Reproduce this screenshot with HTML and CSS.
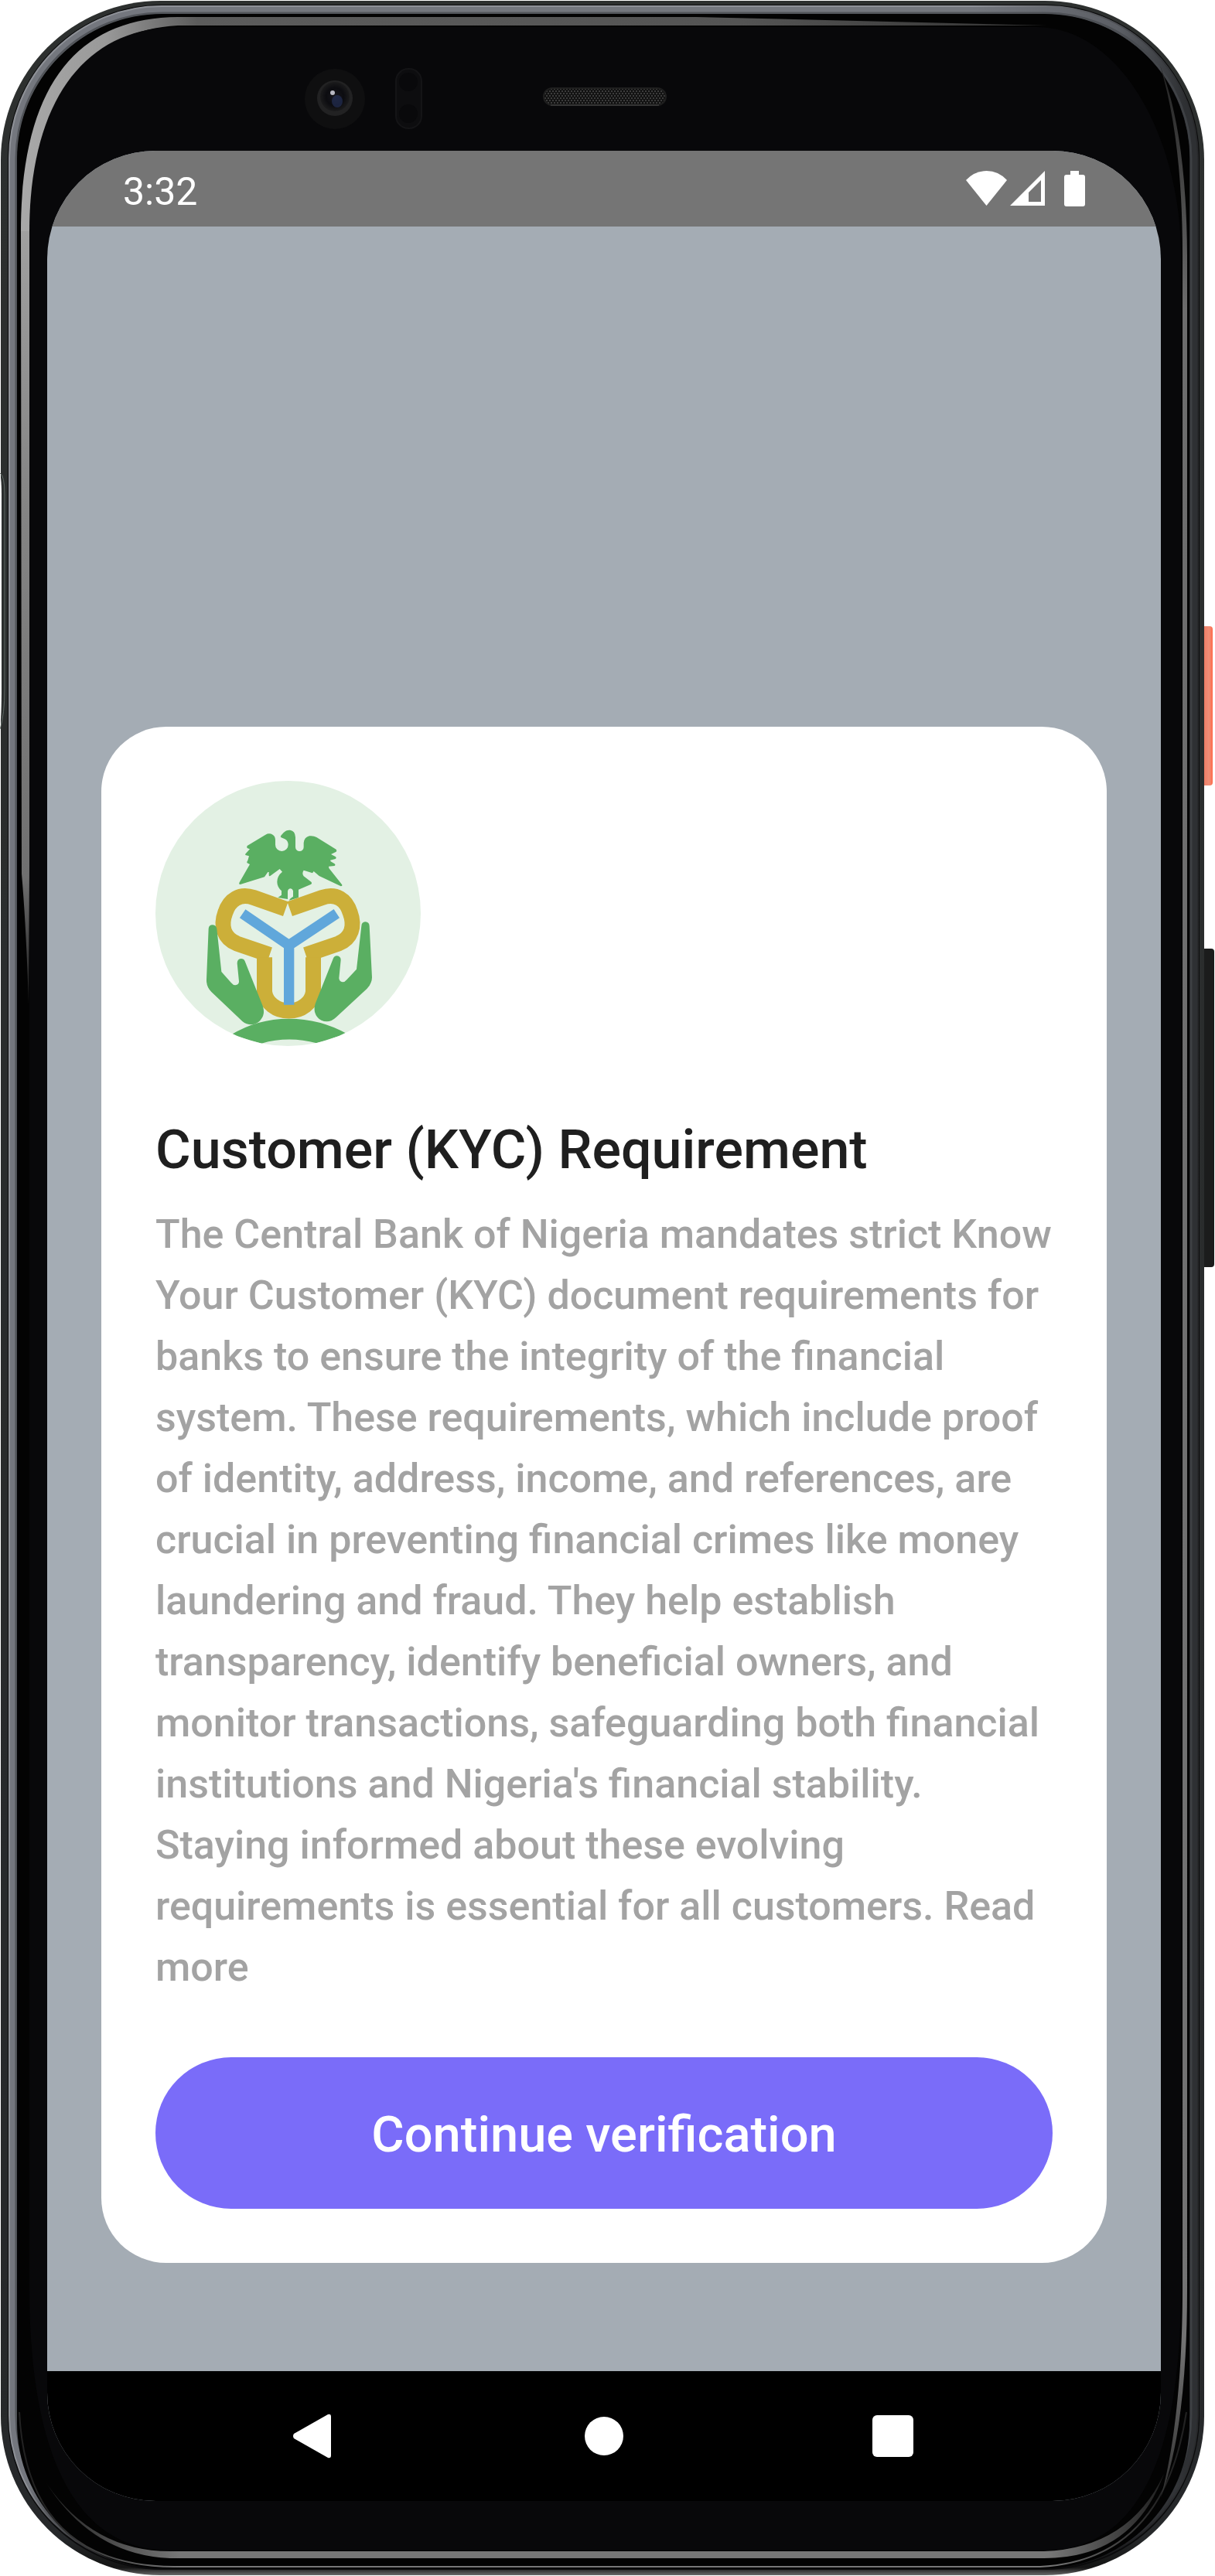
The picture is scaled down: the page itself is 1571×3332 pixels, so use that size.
FILE: index.html
```html
<!DOCTYPE html>
<html lang="en">
<head>
<meta charset="utf-8">
<meta name="viewport" content="width=device-width, initial-scale=1">
<title>Customer (KYC) Requirement</title>
<link rel="stylesheet" href="styles.css">
</head>
<body>
<div class="device">
  <svg class="frame" viewBox="0 0 1571 3332" preserveAspectRatio="none" aria-hidden="true">
    <defs>
      <linearGradient id="power" x1="0" x2="1" y1="0" y2="0">
        <stop offset="0" stop-color="#b9452f"/><stop offset=".25" stop-color="#ee7a62"/><stop offset=".7" stop-color="#f08f78"/><stop offset="1" stop-color="#ff6a4a"/>
      </linearGradient>
      <linearGradient id="shell" x1="0" x2="0" y1="0" y2="1">
        <stop offset="0" stop-color="#2d302f"/><stop offset=".985" stop-color="#26282a"/><stop offset=".997" stop-color="#141414"/><stop offset="1" stop-color="#6a6a6a"/>
      </linearGradient>
      <linearGradient id="rim" gradientUnits="userSpaceOnUse" x1="0" y1="0" x2="1571" y2="0">
        <stop offset="0" stop-color="#74777e"/><stop offset=".8" stop-color="#74777e"/><stop offset=".92" stop-color="#5c5f65"/><stop offset=".975" stop-color="#2e3033"/><stop offset="1" stop-color="#2e3033"/>
      </linearGradient>
      <linearGradient id="rimedge" gradientUnits="userSpaceOnUse" x1="0" y1="0" x2="1571" y2="0">
        <stop offset="0" stop-color="#8e9197"/><stop offset=".8" stop-color="#8e9197"/><stop offset=".95" stop-color="#3a3c40"/><stop offset="1" stop-color="#202122"/>
      </linearGradient>
      <linearGradient id="rimfade" gradientUnits="userSpaceOnUse" x1="0" y1="0" x2="0" y2="3332">
        <stop offset="0" stop-color="#fff"/><stop offset=".965" stop-color="#fff"/><stop offset=".99" stop-color="#444"/><stop offset="1" stop-color="#000"/>
      </linearGradient>
      <mask id="rimmask"><rect width="1571" height="3332" fill="url(#rimfade)"/></mask>
      <linearGradient id="glowTop" gradientUnits="userSpaceOnUse" x1="30" y1="0" x2="1355" y2="0">
        <stop offset="0" stop-color="#a8a8a8"/><stop offset=".08" stop-color="#999"/><stop offset=".17" stop-color="#5c5c5c"/><stop offset=".7" stop-color="#545454"/><stop offset="1" stop-color="#333"/>
      </linearGradient>
      <linearGradient id="glowLeft" gradientUnits="userSpaceOnUse" x1="0" y1="200" x2="0" y2="1300">
        <stop offset="0" stop-color="#a8a8a8"/><stop offset=".4" stop-color="#858585"/><stop offset=".85" stop-color="#707070"/><stop offset="1" stop-color="#1a1a1a"/>
      </linearGradient>
      <linearGradient id="glowRight" gradientUnits="userSpaceOnUse" x1="0" y1="85" x2="0" y2="3250">
        <stop offset="0" stop-color="#222"/><stop offset=".1" stop-color="#6c6c6c"/><stop offset=".93" stop-color="#737373"/><stop offset="1" stop-color="#2a2a2a"/>
      </linearGradient>
      <linearGradient id="glowBottom" gradientUnits="userSpaceOnUse" x1="60" y1="0" x2="1500" y2="0">
        <stop offset="0" stop-color="#222"/><stop offset=".12" stop-color="#777"/><stop offset=".9" stop-color="#777"/><stop offset="1" stop-color="#222"/>
      </linearGradient>
      <radialGradient id="lens"><stop offset="0" stop-color="#17171c"/><stop offset=".6" stop-color="#0c0c10"/><stop offset="1" stop-color="#1b1b1c"/></radialGradient>
      <pattern id="mesh" width="4" height="6" patternUnits="userSpaceOnUse">
        <rect width="4" height="6" fill="#121212"/><rect width="2" height="2" x="0" y="0" fill="#3c3c3c"/><rect width="2" height="2" x="2" y="3" fill="#3c3c3c"/>
      </pattern>
    </defs>
    <rect x="1552" y="810" width="16" height="206" rx="4" fill="url(#power)"/>
    <rect x="1550" y="1227" width="20" height="412" rx="4" fill="#1b1c1c"/>
    <rect x="1" y="1" width="1556" height="3330" rx="206" fill="url(#shell)"/>
    <path d="M0 612Q6 615 6 640V890Q6 925 0 943" fill="none" stroke="#5d6763" stroke-width="1"/>
    <path d="M0 612Q2 620 2 640V890Q2 925 0 943Z" fill="#fff"/>
    <rect x="10" y="6" width="1541" height="3318" rx="199" fill="#0b0b0c"/>
    <g mask="url(#rimmask)" fill="none">
      <rect x="17" y="13" width="1527" height="3303" rx="192" stroke-width="11" stroke="url(#rim)"/>
      <rect x="12" y="8" width="1537" height="3313" rx="197" stroke-width="2" stroke="url(#rimedge)"/>
      <rect x="21" y="17" width="1519" height="3295" rx="188" stroke-width="3" stroke="#45474c" stroke-opacity=".7"/>
    </g>
    <rect x="22" y="18" width="1516" height="3304" rx="188" fill="#030303"/>
    <path d="M25 3120Q35 3319 225 3320H1345Q1505 3312 1534 3120" fill="none" stroke="url(#glowBottom)" stroke-width="2"/>
    <path d="M27 300C27 110 100 23 230 22H900L1353 33H230C110 40 40 130 40 300Z" fill="url(#glowTop)"/>
    <path d="M27 299H40L38 1120L37 1300Q34 1200 28 1130Z" fill="url(#glowLeft)"/>
    <path d="M1500 85Q1529 180 1529 330V2960C1529 3090 1515 3180 1501 3230Q1535 3140 1535 2960V330Q1534 170 1500 85Z" fill="url(#glowRight)"/>
    <path d="M60 3212Q120 3300 220 3300H1350Q1460 3296 1505 3200Q1465 3309 1350 3309H220Q120 3305 60 3212Z" fill="url(#glowBottom)"/>
    <path d="M38 300C38 130 110 35 230 35H1340C1450 35 1527 180 1527 330V2960C1527 3160 1480 3299 1350 3299H220C90 3299 38 3160 38 2960Z" fill="#08080a"/>
    <circle cx="433" cy="128" r="39" fill="#0f0f10"/>
    <circle cx="433" cy="127" r="23" fill="#222223"/>
    <circle cx="433" cy="125" r="19" fill="url(#lens)"/>
    <ellipse cx="436" cy="131" rx="7" ry="8" fill="#26345f" opacity=".6"/>
    <circle cx="430" cy="120" r="3" fill="#b9b9c2"/>
    <rect x="512" y="89" width="33" height="77" rx="16" fill="#0d0d0f" stroke="#141416" stroke-width="2"/>
    <circle cx="528" cy="106" r="12" fill="#09090b"/>
    <circle cx="528" cy="147" r="12" fill="#09090b"/>
    <rect x="703" y="114" width="158" height="22" rx="11" fill="url(#mesh)" stroke="#1e1e1e" stroke-width="2"/>
    <path d="M712 136H852" stroke="#4c4c4c" stroke-width="1"/>
  </svg>

  <div class="screen">
    <header class="status-bar">
      <time class="clock">3:32</time>
      <div class="status-icons">
        <svg width="53" height="46" viewBox="0 0 53 46" role="img" aria-label="Wi-Fi"><path d="M0 12Q11 0 26.500 0T53 12L26.500 45Z" fill="#fff"/></svg>
        <svg width="45" height="46" viewBox="0 0 45 46" role="img" aria-label="Signal"><path fill-rule="evenodd" d="M45 0V45H0ZM40 12L24 28V40H40Z" fill="#fff"/></svg>
        <svg class="battery" width="27" height="46" viewBox="0 0 27 46" role="img" aria-label="Battery"><path d="M8 0H19V5H24Q27 5 27 8V43Q27 46 24 46H3Q0 46 0 43V8Q0 5 3 5H8Z" fill="#fff"/></svg>
      </div>
    </header>

    <main class="content">
      <section class="card" role="dialog" aria-labelledby="title">
        <svg class="emblem" viewBox="33 29 1029 1029" role="img" aria-label="Central Bank of Nigeria">
          <defs><clipPath id="disc"><circle cx="547.500" cy="543.500" r="514.500"/></clipPath></defs>
          <circle cx="547.500" cy="543.500" r="514.500" fill="#e3f1e4"/>
          <g fill="#5aaf62">
            <path d="M389 281L460 238Q474 230 488 238Q498 245 498 258V277A25 25 0 0 0 548 277Q548 262 535 255L521 249Q516 246 520 241L530 230Q540 219 555 220Q575 223 576 248V286A16 16 0 0 0 608 286V270Q610 248 630 243Q646 241 658 248L734 295Q738 299 734 304L714 314L731 323Q737 328 731 332L711 337L713 342L728 351Q733 356 727 359L705 361L706 368L756 431Q760 437 752 438L668 398L647 380L642 387L608 376Q600 388 608 399L638 422Q641 427 637 430L588 451V482L552 493Q552 487 567 478V456Q564 447 557 447Q549 447 546 457V488L508 482L522 472V456Q505 440 505 421Q505 398 525 382L515 371L478 398Q473 400 473 394V383H469L456 402L362 431Q355 431 359 423L399 353L388 347Q387 343 391 338L396 321L382 317Q380 313 384 310L399 294L389 290Q386 286 389 281Z"/>
            <g clip-path="url(#disc)"><path fill-rule="evenodd" d="M327 1014Q428 952 550 952T775 1010L658 1047Q550 1018 444 1048Z"/></g>
          </g>
          <g fill="none" stroke="#ccaf39" stroke-width="60">
            <path d="M538 526L414 482C360 464 320 490 304 540C284 594 300 640 348 660L476 704"/>
            <path d="M554 526L680 482C734 464 772 490 788 540C808 594 792 640 744 660L616 704"/>
            <path d="M456 714V848A95 82 0 0 0 645 848V714"/>
          </g>
          <path d="M371 544L551 667L736 544M551 660V898" fill="none" stroke="#60a7db" stroke-width="40"/>
          <g fill="#5aaf62">
            <path d="M239 603Q240 588 255 588Q269 589 271 603L289 770L327 813Q334 822 343 822Q357 820 357 807L350 737Q350 720 365 719Q376 719 380 729L449 902Q460 934 442 955Q430 973 405 975Q386 975 370 962L250 848Q230 828 231 800Z"/>
            <path d="M832 592Q833 577 847 576Q862 577 863 592L873 792Q873 815 853 836L734 946Q716 963 698 963Q674 963 660 945Q644 923 653 894L722 720Q726 708 737 708Q752 710 752 724L745 795Q746 809 759 810Q768 810 775 801L813 760Z"/>
          </g>
        </svg>
        <h1 class="title" id="title">Customer (KYC) Requirement</h1>
        <p class="description">The Central Bank of Nigeria mandates strict Know Your Customer (KYC) document requirements for banks to ensure the integrity of the financial system. These requirements, which include proof of identity, address, income, and references, are crucial in preventing financial crimes like money laundering and fraud. They help establish transparency, identify beneficial owners, and monitor transactions, safeguarding both financial institutions and Nigeria's financial stability. Staying informed about these evolving requirements is essential for all customers. Read more</p>
        <button class="primary" type="button">Continue verification</button>
      </section>
    </main>

    <nav class="nav-bar" aria-label="System">
      <button class="nav-button" type="button" aria-label="Back"><svg width="56" height="58" viewBox="0 0 56 58"><path d="M1 26L45 1Q49 0 49 4V54Q49 58 45 57L1 32Q-1 29 1 26Z" fill="#fff"/></svg></button>
      <button class="nav-button" type="button" aria-label="Home"><svg width="56" height="58" viewBox="0 0 56 58"><circle cx="28" cy="29" r="25" fill="#fff"/></svg></button>
      <button class="nav-button" type="button" aria-label="Recent apps"><svg width="56" height="58" viewBox="0 0 56 58"><rect x="1" y="2" width="53" height="54" rx="6" fill="#fff"/></svg></button>
    </nav>
  </div>
</div>
</body>
</html>
```
FILE: styles.css
```css
* {
  box-sizing: border-box;
}

body {
  margin: 0;
  background: #fff;
  font-family: Roboto, "Liberation Sans", sans-serif;
}

.device {
  position: relative;
  display: flex;
  min-height: 100vh;
  padding: 195px 70px 97px 61px;
}

/* The handset drawing sits behind the screen. */
.frame {
  position: absolute;
  inset: 0;
  width: 100%;
  height: 100%;
}

.screen {
  position: relative;
  display: flex;
  flex: 1;
  flex-direction: column;
  overflow: hidden;
  border-radius: 140px;
  background: #a4acb4;
}

.status-bar {
  display: flex;
  align-items: center;
  justify-content: space-between;
  height: 98px;
  padding: 0 98px;
  background: #757575;
  color: #fff;
}

.clock {
  padding-top: 8px;
  font-size: 50px;
  line-height: 56px;
}

.status-icons {
  display: flex;
  gap: 4px;
}

.battery {
  margin-left: 21px;
}

.status-icons svg,
.nav-button svg,
.emblem {
  display: block;
}

.content {
  display: flex;
  flex: 1;
  align-items: flex-end;
  padding: 140px 70px;
}

.card {
  display: flex;
  flex: 1;
  flex-direction: column;
  padding: 70px;
  border-radius: 84px;
  background: #fff;
}

.emblem {
  width: 343px;
  height: 343px;
}

.title {
  margin: 92px 0 28px;
  color: #1f1f1f;
  font-size: 70px;
  font-weight: 500;
  line-height: 84px;
}

.description {
  margin: 0 0 77px;
  color: #a3a3a3;
  font-size: 52px;
  font-weight: 500;
  line-height: 79px;
}

.primary {
  height: 196px;
  padding: 4px 0 0;
  border: 0;
  border-radius: 98px;
  background: #7a6cf9;
  color: #fff;
  font: 500 65px/80px Roboto, "Liberation Sans", sans-serif;
}

.nav-bar {
  display: flex;
  align-items: center;
  justify-content: center;
  gap: 318px;
  height: 168px;
  background: #000;
}

.nav-button {
  padding: 0;
  border: 0;
  background: none;
}
```
